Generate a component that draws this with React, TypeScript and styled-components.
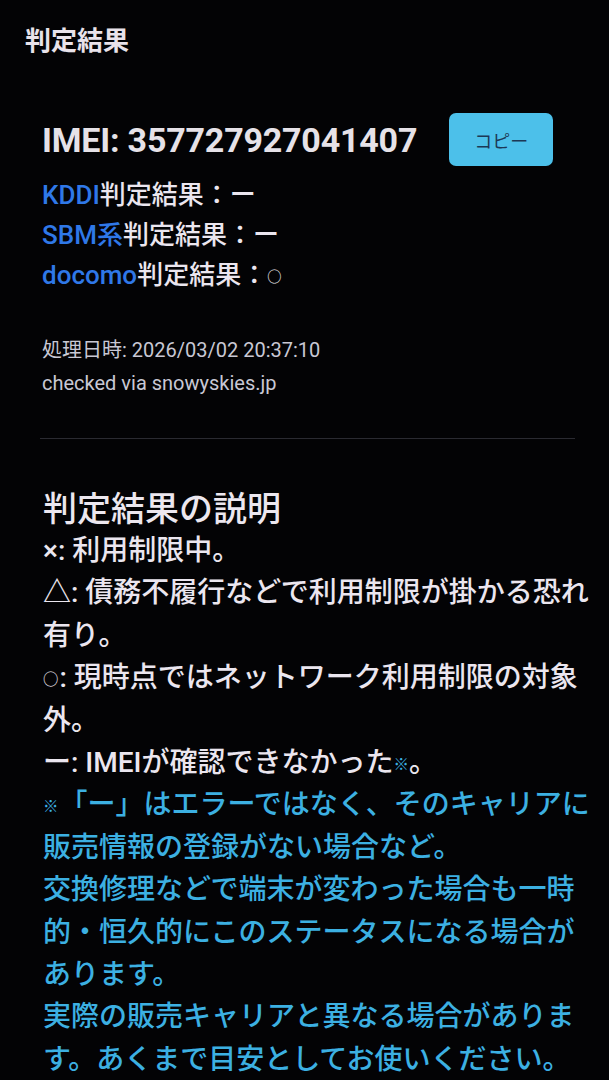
import React from "react";
import styled, { createGlobalStyle } from "styled-components";

const Global = createGlobalStyle`
  html, body {
    margin: 0;
    padding: 0;
    background: #030305;
  }
  body {
    font-family: "Roboto", "Noto Sans CJK JP", sans-serif;
    color: #ebe6ef;
    -webkit-font-smoothing: antialiased;
  }
`;

const Page = styled.div`
  width: 609px;
  min-height: 1080px;
  background: #030305;
  overflow: hidden;
`;

const Header = styled.h1`
  margin: 0;
  padding: 26px 0 0 25px;
  font-size: 26px;
  line-height: 31px;
  font-weight: 700;
  color: #e8e2ea;
`;

const Card = styled.section`
  padding: 56px 34px 0 42px;
`;

const ImeiRow = styled.div`
  display: flex;
  align-items: center;
  gap: 32px;
  height: 53px;
`;

const Imei = styled.div`
  font-size: 34px;
  font-weight: 700;
  color: #e6e2e8;
  letter-spacing: -0.2px;
`;

const CopyButton = styled.button`
  width: 104px;
  height: 53px;
  border: none;
  border-radius: 7px;
  background: #4cc0ea;
  color: #1c3856;
  font-family: "Noto Sans CJK JP", sans-serif;
  font-size: 18px;
  padding: 0;
`;

const Results = styled.div`
  margin-top: 9px;
  display: flex;
  flex-direction: column;
`;

const ResultLine = styled.div`
  font-size: 26px;
  line-height: 40px;
  font-weight: 500;
  color: #ebe6ef;
`;

const Carrier = styled.span`
  color: #2f78e8;
`;

const Small = styled.span`
  display: inline-block;
  font-size: 0.55em;
  line-height: 1;
  margin-right: 1px;
  vertical-align: 0.15em;
`;

const Meta = styled.div`
  margin-top: 39px;
  font-size: 20px;
  line-height: 33px;
  color: #c8c8d4;
`;

const Divider = styled.hr`
  margin: 38px 0 0 -2px;
  border: none;
  height: 1px;
  background: #2a2a31;
  width: 535px;
`;

const Explain = styled.div`
  margin-top: 50px;
  padding-left: 1px;
  width: 551px;
`;

const ExplainTitle = styled.h2`
  margin: 0;
  font-size: 34px;
  line-height: 41px;
  font-weight: 500;
  color: #ece7ef;
`;

const Para = styled.p<{ $tone?: "white" | "cyan" }>`
  margin: 0;
  font-size: 28px;
  line-height: 42.4px;
  font-weight: 500;
  color: ${(p) => (p.$tone === "cyan" ? "#3cb0e2" : "#ebe6ef")};
`;

const CyanMark = styled.span`
  display: inline-block;
  color: #3cb0e2;
  font-size: 0.55em;
  line-height: 1;
  vertical-align: 0.15em;
`;

export default function App() {
  return (
    <Page>
      <Global />
      <Header>判定結果</Header>
      <Card>
        <ImeiRow>
          <Imei>IMEI: 357727927041407</Imei>
          <CopyButton>コピー</CopyButton>
        </ImeiRow>
        <Results>
          <ResultLine>
            <Carrier>KDDI</Carrier>判定結果：ー
          </ResultLine>
          <ResultLine>
            <Carrier>SBM系</Carrier>判定結果：ー
          </ResultLine>
          <ResultLine>
            <Carrier>docomo</Carrier>判定結果：<Small>○</Small>
          </ResultLine>
        </Results>
        <Meta>
          処理日時: 2026/03/02 20:37:10
          <br />
          checked via snowyskies.jp
        </Meta>
        <Divider />
        <Explain>
          <ExplainTitle>判定結果の説明</ExplainTitle>
          <Para>×: 利用制限中。</Para>
          <Para>△: 債務不履行などで利用制限が掛かる恐れ有り。</Para>
          <Para>
            <Small>○</Small>: 現時点ではネットワーク利用制限の対象外。
          </Para>
          <Para>
            ー: IMEIが確認できなかった<CyanMark>※</CyanMark>。
          </Para>
          <Para $tone="cyan">
            <Small>※</Small>「ー」はエラーではなく、そのキャリアに販売情報の登録がない場合など。
          </Para>
          <Para $tone="cyan">
            交換修理などで端末が変わった場合も一時的・恒久的にこのステータスになる場合があります。
          </Para>
          <Para $tone="cyan">
            実際の販売キャリアと異なる場合があります。あくまで目安としてお使いください。
          </Para>
        </Explain>
      </Card>
    </Page>
  );
}
